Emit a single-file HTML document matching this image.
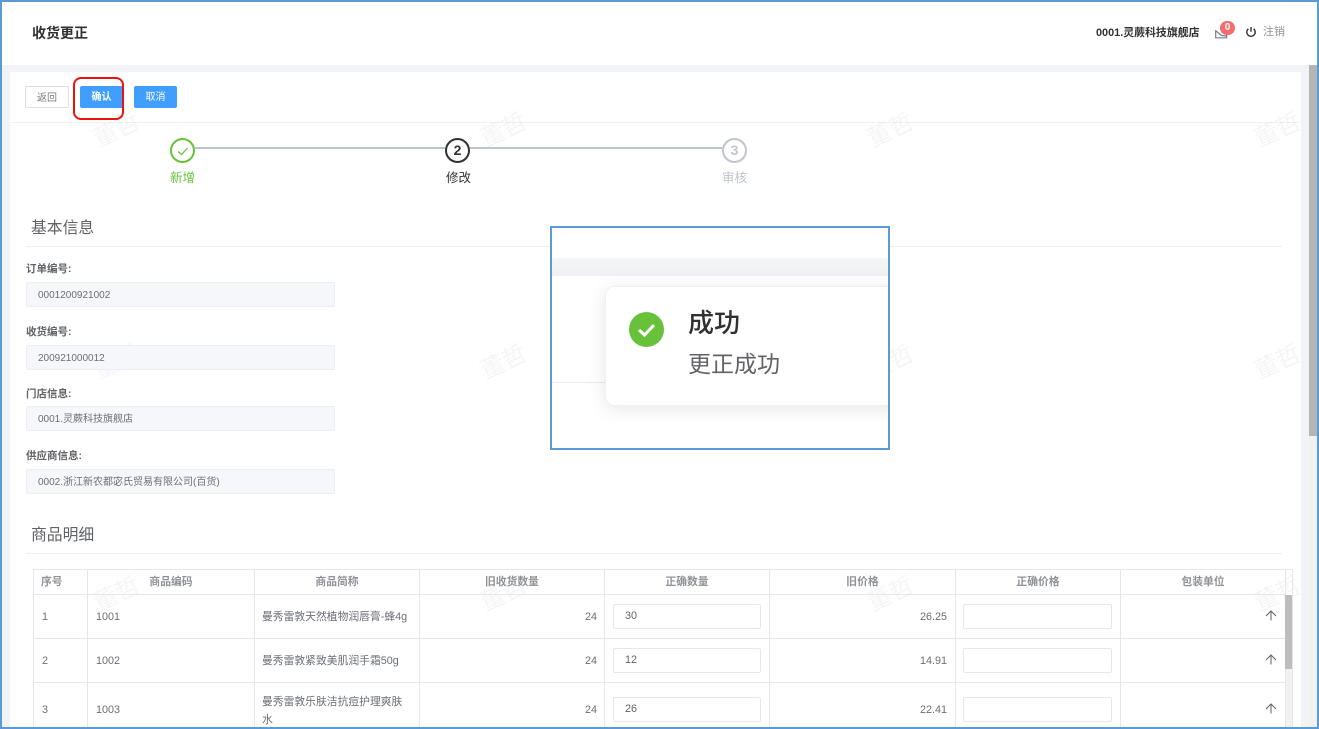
<!DOCTYPE html>
<html lang="zh">
<head>
<meta charset="utf-8">
<title>收货更正</title>
<style>
html,body{margin:0;padding:0;background:#fff}
body{width:1319px;height:729px;position:relative;overflow:hidden;font-family:"Liberation Sans","Noto Sans CJK SC",sans-serif;color:#606266}
div,span,svg{position:absolute;box-sizing:border-box}
.t{white-space:nowrap;line-height:1}
.btn{top:86px;height:22px;border-radius:2px;font-size:10px;line-height:23px;text-align:center}
.wm{font-size:24px;color:#000;opacity:.035;transform:rotate(-25deg);white-space:nowrap;line-height:1;width:50px;text-align:center;font-weight:400}
.lbl{left:26px;font-size:10.5px;font-weight:700;color:#606266;line-height:1;white-space:nowrap}
.ipt{left:26px;width:309px;height:25px;background:#f5f7fa;border:1px solid #eceef3;border-radius:2px;font-size:10px;line-height:25px;padding-left:11px;color:#6b6e75;white-space:nowrap}
.h{background:#e6e7ea}
.th{top:576px;font-size:10.8px;font-weight:700;color:#909297;line-height:13px;text-align:center;white-space:nowrap}
.td{font-size:10.800px;color:#6b6e75;line-height:12px;white-space:nowrap}
.r{text-align:right}
.box{height:25px;background:#fff;border:1px solid #e6e7ec;border-radius:2px;font-size:10.800px;line-height:23px;padding-left:11px;color:#606266}
.step{font-size:12.500px;line-height:1;white-space:nowrap}
.cir{width:25px;height:25px;border-radius:50%;background:#fff;text-align:center;font-weight:700;font-size:14px;line-height:21px}
</style>
</head>
<body>

<!-- page background -->
<div style="left:2px;top:65px;width:1307px;height:664px;background:#f2f3f6"></div>
<div style="left:10px;top:72px;width:1291px;height:657px;background:#fff"></div>

<!-- header -->
<div class="t" style="left:32px;top:26px;font-size:14px;font-weight:700;color:#303133">收货更正</div>
<div class="t" style="left:1096px;top:28px;font-size:10.900px;font-weight:700;color:#303133">0001.灵蕨科技旗舰店</div>
<svg style="left:1214px;top:27px" width="14" height="13" viewBox="0 0 14 13" fill="none" stroke="#7d7a8c" stroke-width="1.2"><path d="M1.700 3V10.800H12.700V6"/><path d="M2 4L7.500 8.500L12.500 9"/></svg>
<div style="left:1220px;top:21px;width:15px;height:14px;border-radius:7px;background:#f56c6c;color:#fff;font-size:10px;font-weight:700;text-align:center;line-height:14px">0</div>
<svg style="left:1245px;top:26px" width="12" height="12" viewBox="0 0 12 12" fill="none" stroke="#303133" stroke-width="1.4"><path d="M3.400 2.800A4.200 4.200 0 1 0 8.600 2.800"/><path d="M6 1V5.800"/></svg>
<div class="t" style="left:1263px;top:27px;font-size:11px;color:#909399">注销</div>

<!-- toolbar -->
<div class="btn" style="left:25px;width:44px;background:#fff;border:1px solid #dcdfe6;color:#777a80">返回</div>
<div class="btn" style="left:80px;width:43px;background:#409eff;color:#fff;font-weight:700">确认</div>
<div class="btn" style="left:134px;width:43px;background:#409eff;color:#fff">取消</div>
<div style="left:73px;top:77px;width:51px;height:43px;border:2px solid #ee1111;border-radius:8px"></div>
<div style="left:10px;top:122px;width:1291px;height:1px;background:#f0f1f4"></div>

<!-- watermarks -->
<div class="wm" style="left:92px;top:119px">董哲</div>
<div class="wm" style="left:479px;top:119px">董哲</div>
<div class="wm" style="left:866px;top:119px">董哲</div>
<div class="wm" style="left:1253px;top:119px">董哲</div>
<div class="wm" style="left:92px;top:351px">董哲</div>
<div class="wm" style="left:479px;top:351px">董哲</div>
<div class="wm" style="left:866px;top:351px">董哲</div>
<div class="wm" style="left:1253px;top:351px">董哲</div>
<div class="wm" style="left:92px;top:583px">董哲</div>
<div class="wm" style="left:479px;top:583px">董哲</div>
<div class="wm" style="left:866px;top:583px">董哲</div>
<div class="wm" style="left:1253px;top:583px">董哲</div>

<!-- steps -->
<div style="left:195px;top:147px;width:250px;height:2px;background:#c0c4cc"></div>
<div style="left:470px;top:147px;width:252px;height:2px;background:#c0c4cc"></div>
<div class="cir" style="left:170px;top:138px;border:2px solid #67c23a"></div>
<svg style="left:176px;top:144px" width="14" height="14" viewBox="0 0 14 14" fill="none" stroke="#67c23a" stroke-width="1.2"><path d="M2 7.500L5.500 10.500L11.500 4"/></svg>
<div class="step" style="left:170px;top:172px;color:#67c23a">新增</div>
<div class="cir" style="left:445px;top:138px;border:2px solid #303133;color:#303133">2</div>
<div class="step" style="left:446px;top:172px;color:#303133">修改</div>
<div class="cir" style="left:722px;top:138px;border:2px solid #c0c4cc;color:#c0c4cc">3</div>
<div class="step" style="left:722px;top:172px;color:#c0c4cc">审核</div>

<!-- basic info -->
<div class="t" style="left:31px;top:221px;font-size:15.800px;color:#606266">基本信息</div>
<div style="left:26px;top:246px;width:1256px;height:1px;background:#eceef3"></div>

<div class="lbl" style="top:264px">订单编号:</div>
<div class="ipt" style="top:282px">0001200921002</div>
<div class="lbl" style="top:327px">收货编号:</div>
<div class="ipt" style="top:345px">200921000012</div>
<div class="lbl" style="top:389px">门店信息:</div>
<div class="ipt" style="top:406px">0001.灵蕨科技旗舰店</div>
<div class="lbl" style="top:451px">供应商信息:</div>
<div class="ipt" style="top:469px">0002.浙江新农都宓氏贸易有限公司(百货)</div>

<!-- goods -->
<div class="t" style="left:31px;top:528px;font-size:15.800px;color:#606266">商品明细</div>
<div style="left:26px;top:553px;width:1256px;height:1px;background:#eceef3"></div>

<!-- table lines -->
<div class="h" style="left:33px;top:569px;width:1260px;height:1px"></div>
<div class="h" style="left:33px;top:594px;width:1252px;height:1px"></div>
<div class="h" style="left:33px;top:638px;width:1252px;height:1px"></div>
<div class="h" style="left:33px;top:682px;width:1252px;height:1px"></div>
<div class="h" style="left:33px;top:569px;width:1px;height:160px"></div>
<div class="h" style="left:87px;top:569px;width:1px;height:160px"></div>
<div class="h" style="left:254px;top:569px;width:1px;height:160px"></div>
<div class="h" style="left:419px;top:569px;width:1px;height:160px"></div>
<div class="h" style="left:604px;top:569px;width:1px;height:160px"></div>
<div class="h" style="left:769px;top:569px;width:1px;height:160px"></div>
<div class="h" style="left:955px;top:569px;width:1px;height:160px"></div>
<div class="h" style="left:1120px;top:569px;width:1px;height:160px"></div>
<div class="h" style="left:1285px;top:569px;width:1px;height:160px"></div>
<div class="h" style="left:1292px;top:569px;width:1px;height:160px"></div>

<!-- table scrollbar -->
<div style="left:1286px;top:595px;width:6px;height:134px;background:#f1f1f1"></div>
<div style="left:1285px;top:595px;width:7px;height:74px;background:#bdbdbd"></div>

<!-- table head -->
<div class="th" style="left:41px">序号</div>
<div class="th" style="left:88px;width:166px">商品编码</div>
<div class="th" style="left:255px;width:164px">商品简称</div>
<div class="th" style="left:420px;width:184px">旧收货数量</div>
<div class="th" style="left:605px;width:164px">正确数量</div>
<div class="th" style="left:770px;width:185px">旧价格</div>
<div class="th" style="left:956px;width:164px">正确价格</div>
<div class="th" style="left:1121px;width:164px">包装单位</div>

<!-- row 1 -->
<div class="td" style="left:42px;top:611px">1</div>
<div class="td" style="left:96px;top:611px">1001</div>
<div class="td" style="left:262px;top:611px">曼秀雷敦天然植物润唇膏-蜂4g</div>
<div class="td r" style="left:500px;width:97px;top:611px">24</div>
<div class="box" style="left:613px;top:604px;width:148px">30</div>
<div class="td r" style="left:850px;width:97px;top:611px">26.25</div>
<div class="box" style="left:963px;top:604px;width:149px"></div>
<svg style="left:1265px;top:610px" width="12" height="12" viewBox="0 0 12 12" fill="none" stroke="#606266" stroke-width="1"><path d="M1 6L6 1L11 6"/><path d="M6 1V10.500"/></svg>

<!-- row 2 -->
<div class="td" style="left:42px;top:655px">2</div>
<div class="td" style="left:96px;top:655px">1002</div>
<div class="td" style="left:262px;top:655px">曼秀雷敦紧致美肌润手霜50g</div>
<div class="td r" style="left:500px;width:97px;top:655px">24</div>
<div class="box" style="left:613px;top:648px;width:148px">12</div>
<div class="td r" style="left:850px;width:97px;top:655px">14.91</div>
<div class="box" style="left:963px;top:648px;width:149px"></div>
<svg style="left:1265px;top:654px" width="12" height="12" viewBox="0 0 12 12" fill="none" stroke="#606266" stroke-width="1"><path d="M1 6L6 1L11 6"/><path d="M6 1V10.500"/></svg>

<!-- row 3 -->
<div class="td" style="left:42px;top:704px">3</div>
<div class="td" style="left:96px;top:704px">1003</div>
<div class="td" style="left:262px;top:696px">曼秀雷敦乐肤洁抗痘护理爽肤</div>
<div class="td" style="left:262px;top:714px">水</div>
<div class="td r" style="left:500px;width:97px;top:704px">24</div>
<div class="box" style="left:613px;top:697px;width:148px">26</div>
<div class="td r" style="left:850px;width:97px;top:704px">22.41</div>
<div class="box" style="left:963px;top:697px;width:149px"></div>
<svg style="left:1265px;top:703px" width="12" height="12" viewBox="0 0 12 12" fill="none" stroke="#606266" stroke-width="1"><path d="M1 6L6 1L11 6"/><path d="M6 1V10.500"/></svg>

<!-- page scrollbar -->
<div style="left:1309px;top:65px;width:8px;height:664px;background:#f1f1f1"></div>
<div style="left:1309px;top:65px;width:8px;height:371px;background:#b5b5b5"></div>

<!-- inset magnified callout -->
<div style="left:550px;top:226px;width:340px;height:224px;background:#fff;border:2px solid #5b9bd5;overflow:hidden">
  <div style="left:0;top:30px;width:336px;height:18px;background:linear-gradient(#f5f6f8,#eff0f3)"></div>
  <div style="left:0;top:154px;width:60px;height:1px;background:#e8ebf2"></div>
  <div style="left:53px;top:58px;width:300px;height:120px;background:#fff;border:1px solid #eef0f5;border-radius:10px;box-shadow:0 3px 18px rgba(0,0,0,.1)"></div>
  <div style="left:77px;top:84px;width:35px;height:35px;border-radius:50%;background:#67c23a"></div>
  <svg style="left:77px;top:84px" width="35" height="35" viewBox="0 0 35 35" fill="none" stroke="#fff" stroke-width="3"><path d="M10 18L15.500 23L25 13"/></svg>
  <div class="t" style="left:136px;top:82px;font-size:26px;font-weight:500;color:#303133">成功</div>
  <div class="t" style="left:136px;top:125px;font-size:23px;color:#606266">更正成功</div>
</div>

<!-- screenshot frame -->
<div style="left:0;top:0;width:1319px;height:729px;border:2px solid #5b9bd5;pointer-events:none"></div>

</body>
</html>
